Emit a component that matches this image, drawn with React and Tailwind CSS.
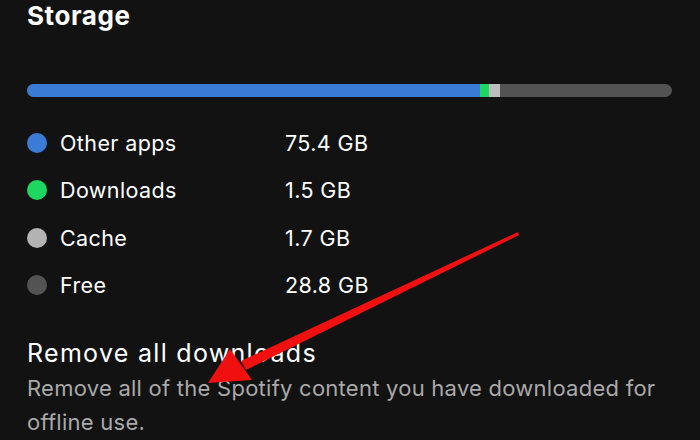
import React from 'react';

const legend = [
  { label: 'Other apps', value: '75.4 GB', dot: 'bg-[#3a7bd5]' },
  { label: 'Downloads', value: '1.5 GB', dot: 'bg-[#1ed760]' },
  { label: 'Cache', value: '1.7 GB', dot: 'bg-[#b3b3b3]' },
  { label: 'Free', value: '28.8 GB', dot: 'bg-[#535353]' },
];

export default function App() {
  return (
    <div
      className="relative w-[700px] h-[440px] overflow-hidden bg-[#121212] text-white"
      style={{ fontFamily: 'Inter, "Noto Sans", sans-serif' }}
    >
      <div className="px-[27px]">
        {/* Header */}
        <h1 className="text-[26px] leading-[32px] font-bold tracking-[0.6px]">Storage</h1>

        {/* Usage bar */}
        <div className="mt-[52px] flex h-[13px] w-[645px] rounded-full overflow-hidden bg-[#535353]">
          <div className="w-[453px] bg-[#3a7bd5]" />
          <div className="w-[9px] bg-[#1ed760]" />
          <div className="w-[11px] bg-[#bdbdbd]" />
        </div>

        {/* Legend */}
        <div className="mt-[22px] flex flex-col">
          {legend.map((item) => (
            <div key={item.label} className="flex items-center h-[47.5px]">
              <span className={`w-[20px] h-[20px] rounded-full ${item.dot}`} />
              <span className="ml-[13px] w-[225px] text-[21.5px] tracking-[0.4px]">{item.label}</span>
              <span className="text-[21.5px] tracking-[0.4px]">{item.value}</span>
            </div>
          ))}
        </div>

        {/* Remove downloads */}
        <div className="mt-[28px]">
          <p className="text-[25px] leading-[32px] tracking-[1.3px]">Remove all downloads</p>
          <p className="mt-[2px] text-[22px] leading-[34px] tracking-[0.25px] text-[#a9a9a9] w-[646px]">
            Remove all of the Spotify content you have downloaded for offline use.
          </p>
        </div>
      </div>

      {/* Red annotation arrow */}
      <svg className="absolute inset-0 pointer-events-none" width="700" height="440" viewBox="0 0 700 440">
        <polygon points="518,232 519,235 246,370 241,361" fill="#f01010" />
        <polygon points="208,383 230,349 252,380" fill="#f01010" />
      </svg>
    </div>
  );
}
